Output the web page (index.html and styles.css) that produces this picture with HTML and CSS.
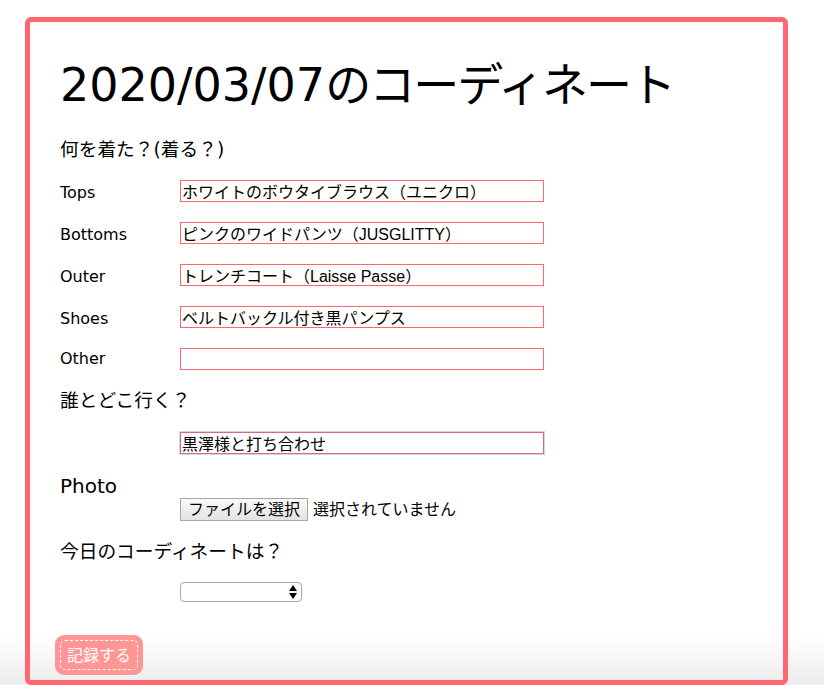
FILE: index.html
```html
<!DOCTYPE html>
<html lang="ja">
<head>
<meta charset="utf-8">
<title>コーディネート</title>
<link rel="stylesheet" href="styles.css">
</head>
<body>
<form class="card">
  <h1 class="title"><span class="date">2020/03/07</span>のコーディネート</h1>
  <h3 class="section">何を着た？(着る？)</h3>
  <div class="row"><label class="label">Tops</label><input class="field" type="text" value="ホワイトのボウタイブラウス（ユニクロ）"></div>
  <div class="row"><label class="label">Bottoms</label><input class="field" type="text" value="ピンクのワイドパンツ（JUSGLITTY）"></div>
  <div class="row"><label class="label">Outer</label><input class="field" type="text" value="トレンチコート（Laisse Passe）"></div>
  <div class="row"><label class="label">Shoes</label><input class="field" type="text" value="ベルトバックル付き黒パンプス"></div>
  <div class="row"><label class="label">Other</label><input class="field" type="text" value=""></div>
  <h3 class="section">誰とどこ行く？</h3>
  <div class="row"><span class="label"></span><input class="field focused" type="text" value="黒澤様と打ち合わせ"></div>
  <div class="photo">Photo</div>
  <div class="file-row"><span class="label"></span><span class="file-btn">ファイルを選択</span><span class="file-none">選択されていません</span></div>
  <h3 class="section">今日のコーディネートは？</h3>
  <div class="row select-row"><span class="label"></span><span class="select"><span class="arrows"><span class="up"></span><span class="down"></span></span></span></div>
  <button class="submit" type="button"><span class="submit-inner">記録する</span></button>
</form>
</body>
</html>
```
FILE: styles.css
```css
html {
  height: 100%;
  background: linear-gradient(to bottom, #ffffff 0, #ffffff 635px, #ececec 685px) no-repeat;
}
body {
  margin: 0;
  font-family: "DejaVu Sans", "Noto Sans CJK JP", sans-serif;
  color: #000;
}
.card {
  margin: 17px 36px 0 25px;
  border: 5px solid #ff6670;
  border-radius: 6px;
  padding: 35px 30px 5px 30px;
}
.title {
  margin: 0;
  font-size: 46px;
  font-weight: normal;
  line-height: 57.6px;
  letter-spacing: -2px;
}
.title .date {
  letter-spacing: 0;
}
.section {
  margin: 24px 0 19px;
  font-size: 18.72px;
  font-weight: normal;
  line-height: 22.5px;
}
.row {
  display: flex;
  align-items: baseline;
  margin-bottom: 20px;
  height: 22px;
}
.label {
  width: 120px;
  flex: none;
  font-size: 16px;
  line-height: 18px;
}
.field {
  box-sizing: border-box;
  width: 364px;
  height: 22px;
  margin: 0;
  padding: 1px 1px;
  border: 1px solid #ff6670;
  font: 16px/18px "Liberation Sans", "Noto Sans CJK JP", sans-serif;
  color: #000;
  outline: none;
  background: #fff;
}
.field.focused {
  border-color: #d9668f;
  box-shadow: 0 0 0 1px #c9d8f2;
}
.row + .section {
  margin-top: 19px;
}
.photo {
  font-size: 20px;
  line-height: 24px;
  margin-top: 18px;
}
.file-row {
  display: flex;
  align-items: center;
  height: 22px;
  margin-top: 1px;
}
.file-btn {
  box-sizing: border-box;
  height: 23px;
  width: 128px;
  display: flex;
  align-items: center;
  justify-content: center;
  border: 1px solid #a6a6a6;
  background: linear-gradient(#fafafa, #e3e3e3);
  font-size: 16px;
  line-height: 18px;
}
.file-none {
  margin-left: 5px;
  font-size: 16px;
  line-height: 18px;
}
.file-row + .section {
  margin-top: 20px;
}
.select-row {
  align-items: flex-start;
  height: 20px;
}
.select {
  box-sizing: border-box;
  width: 122px;
  height: 20px;
  border: 1px solid #a9a9a9;
  border-radius: 4px;
  background: #fff;
  display: flex;
  justify-content: flex-end;
  align-items: center;
  padding-right: 4px;
}
.arrows {
  display: flex;
  flex-direction: column;
  gap: 2px;
}
.up, .down {
  width: 0;
  height: 0;
  border-left: 4px solid transparent;
  border-right: 4px solid transparent;
}
.up { border-bottom: 6px solid #000; }
.down { border-top: 6px solid #000; }
.submit {
  display: block;
  margin: 33px 0 0 -5px;
  padding: 5px;
  border: none;
  border-radius: 9px;
  background: #ff9696;
  cursor: pointer;
}
.submit-inner {
  display: block;
  padding: 5px 6px 4px 6px;
  border: 1px dashed #fff;
  border-radius: 5px;
  color: #fff;
  font: 16px/19px "DejaVu Sans", "Noto Sans CJK JP", sans-serif;
}
```
